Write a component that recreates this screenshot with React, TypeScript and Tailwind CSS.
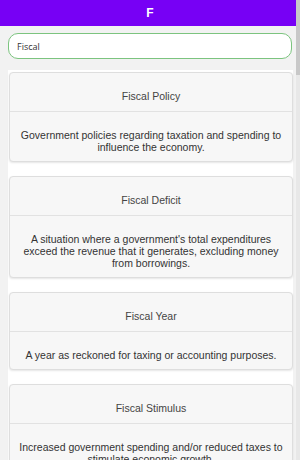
import { useState } from "react";

type Term = {
  title: string;
  desc: string;
};

const terms: Term[] = [
  {
    title: "Fiscal Policy",
    desc: "Government policies regarding taxation and spending to influence the economy.",
  },
  {
    title: "Fiscal Deficit",
    desc: "A situation where a government's total expenditures exceed the revenue that it generates, excluding money from borrowings.",
  },
  {
    title: "Fiscal Year",
    desc: "A year as reckoned for taxing or accounting purposes.",
  },
  {
    title: "Fiscal Stimulus",
    desc: "Increased government spending and/or reduced taxes to stimulate economic growth.",
  },
];

function TermCard({ term }: { term: Term }) {
  return (
    <div className="flex shrink-0 flex-col rounded-[4px] border border-[#dedede] bg-[#f7f7f7] shadow-[0_1px_2px_rgba(0,0,0,0.1)]">
      <div className="px-[6px] pt-[17px] pb-[9px] text-center text-[10.5px] leading-[12px] text-[#444]">
        {term.title}
      </div>
      <div className="border-t border-[#e2e2e2] px-[6px] pt-[17px] pb-[8px] text-center text-[10.5px] leading-[12px] text-[#333]">
        {term.desc}
      </div>
    </div>
  );
}

export default function App() {
  const [query, setQuery] = useState("Fiscal");

  const filtered = terms.filter((t) =>
    t.title.toLowerCase().includes(query.toLowerCase())
  );

  return (
    <div className="relative flex h-[460px] w-[300px] flex-col overflow-hidden bg-[#f2f2f2] font-['Liberation_Sans',Arial,sans-serif]">
      {/* 상단 헤더 */}
      <header className="flex h-[26px] w-full shrink-0 items-center justify-center bg-[#7700f5]">
        <span className="text-[12px] font-bold text-white">F</span>
      </header>

      {/* 검색 입력 */}
      <div className="flex shrink-0 pl-[8px] pr-[8px] pt-[7px]">
        <input
          value={query}
          onChange={(e) => setQuery(e.target.value)}
          className="h-[26px] w-full rounded-[10px] border border-[#7cc47f] bg-white px-[8px] font-['Open_Sans',sans-serif] text-[9px] text-[#333] outline-none"
        />
      </div>

      {/* 결과 카드 목록 */}
      <div className="mt-[11px] ml-[8px] mr-[7px] flex shrink-0 flex-col gap-[14px] bg-white pt-[2px] pl-[1px]">
        {filtered.map((term) => (
          <TermCard key={term.title} term={term} />
        ))}
      </div>

      {/* 스크롤바 흉내 */}
      <div className="absolute top-0 right-0 h-[460px] w-[4px] bg-[#e8e8e8]">
        <div className="h-[75px] w-full bg-[#c8c8c8]" />
      </div>
    </div>
  );
}
